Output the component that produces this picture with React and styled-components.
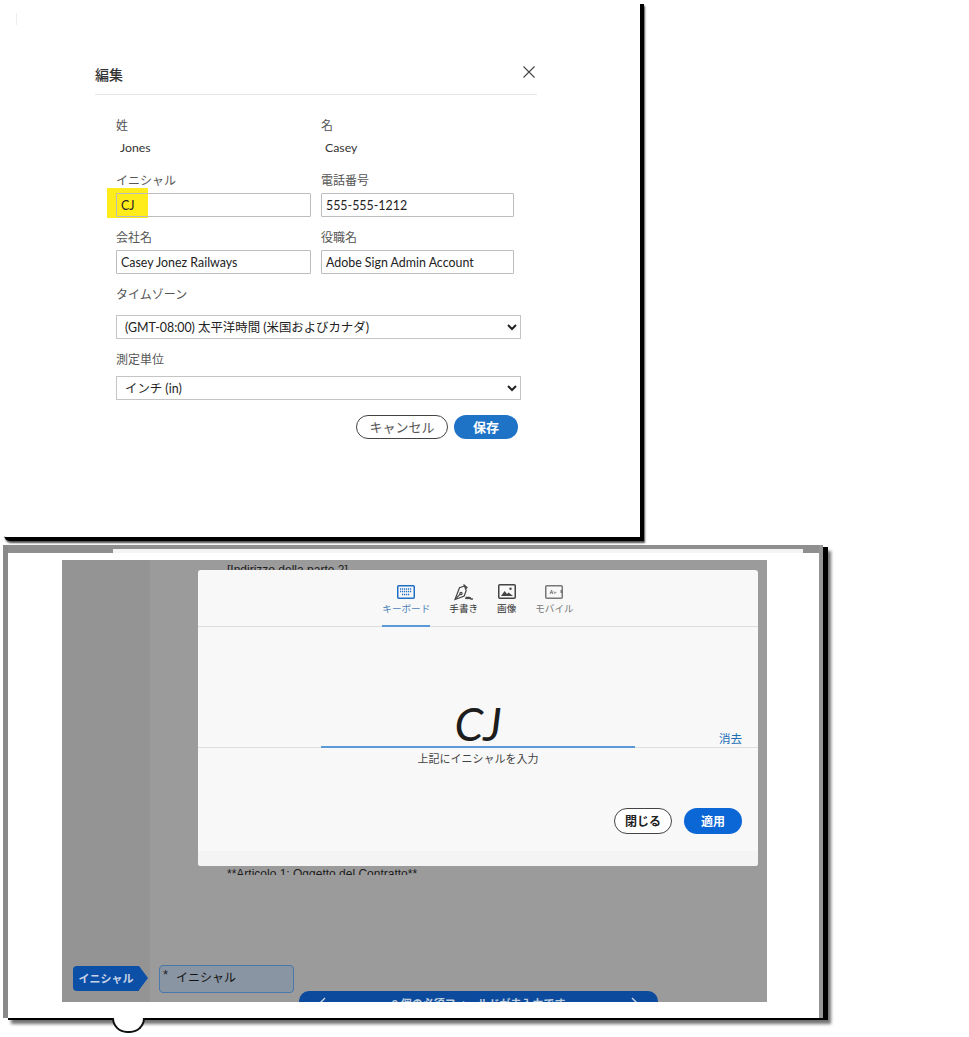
import React from "react";
import styled, { createGlobalStyle } from "styled-components";

const sans = `"Lato", "Noto Sans CJK JP", sans-serif`;

const Global = createGlobalStyle`
  html, body { margin: 0; padding: 0; background: #fff; }
  body { font-family: ${sans}; color: #222; }
  * { box-sizing: border-box; }
`;

const Page = styled.div`
  width: 969px;
  height: 1037px;
  overflow: hidden;
  background: #fff;
`;

/* ---------- top window ---------- */
const EditWindow = styled.section`
  width: 640px;
  height: 537px;
  background: #fff;
  box-shadow: 4px 4px 0 #000, 5px 6px 2px rgba(0, 0, 0, 0.7);
  border-bottom-left-radius: 6px;
  padding-top: 13px;
`;
const Mark = styled.div`
  width: 1px;
  height: 12px;
  margin-left: 16px;
  background: #eee;
`;
const Dialog = styled.div`
  width: 442px;
  margin: 37px 0 0 95px;
`;
const DialogHeader = styled.header`
  height: 33px;
  display: flex;
  align-items: flex-start;
  justify-content: space-between;
  border-bottom: 1px solid #e6e6e6;
  padding-right: 2px;
`;
const DialogTitle = styled.h2`
  margin: 0;
  font-size: 14px;
  line-height: 26px;
  font-weight: 500;
  color: #333;
`;
const CloseIcon = styled.svg`
  width: 12px;
  height: 12px;
  margin-top: 4px;
  stroke: #444;
  stroke-width: 1.1;
  fill: none;
`;
const Form = styled.form`
  margin: 23px 0 0 21px;
  width: 405px;
`;
const NameGrid = styled.div`
  display: grid;
  grid-template-columns: 195px 193px;
  column-gap: 10px;
  row-gap: 13px;
  margin-bottom: ${(p) => p.$after}px;
`;
const Field = styled.div`
  display: flex;
  flex-direction: column;
  gap: ${(p) => p.$gap || 4}px;
`;
const Label = styled.label`
  font-size: 12px;
  line-height: 16px;
  color: #555;
`;
const Value = styled.div`
  font-size: 12.3px;
  line-height: 16px;
  padding-left: 4px;
  color: #333;
`;
const InputWrap = styled.div`
  position: relative;
  background: #fff;
`;
const Highlight = styled.span`
  position: absolute;
  left: -9px;
  top: -5px;
  width: 41px;
  height: 30px;
  background: #ffec1a;
`;
const TextInput = styled.input`
  position: relative;
  display: block;
  width: 100%;
  height: 24px;
  padding: 0 4px;
  border: 1px solid #bdbdbd;
  border-radius: 1px;
  background: transparent;
  font: 12.4px ${sans};
  color: #222;
  outline: none;
`;
const SelectBox = styled.select`
  display: block;
  width: 405px;
  height: 24px;
  padding: 0 4px;
  border: 1px solid #c4c4c4;
  border-radius: 0;
  background: #fff;
  font: 12.4px ${sans};
  color: #222;
  outline: none;
`;
const WideField = styled(Field)`
  margin-bottom: ${(p) => p.$after}px;
`;
const Actions = styled.div`
  display: flex;
  justify-content: flex-end;
  margin-top: ${(p) => p.$top || 0}px;
  gap: ${(p) => p.$gap || 6}px;
  padding-right: ${(p) => p.$right || 3}px;
`;
const Pill = styled.button`
  height: ${(p) => p.$h || 24}px;
  width: ${(p) => p.$w}px;
  padding: 0 0 2px;
  border-radius: 13px;
  font: ${(p) => (p.$primary || p.$bold ? 700 : 400)} ${(p) => p.$fs || 12}px ${sans};
  color: ${(p) => (p.$primary ? "#fff" : p.$ink || "#555")};
  background: ${(p) => (p.$primary ? p.$fill : "#fff")};
  border: ${(p) => (p.$primary ? "none" : "1px solid #444")};
`;

/* ---------- bottom window ---------- */
const SignWindow = styled.section`
  position: relative;
  width: 820px;
  height: 473px;
  margin: 8px 0 0 3px;
  background: #fff;
  border-left: 5px solid #8a8a8a;
  border-right: 4px solid #969696;
  box-shadow: 5px 2px 0 #000, 8px 6px 3px rgba(0, 0, 0, 0.55);
`;
const TopStrip = styled.div`
  height: 8px;
  background: #8f8f8f;
  padding: 4px 16px 0 105px;
`;
const TopBump = styled.div`
  height: 4px;
  background: #f4f4f4;
`;
const Sheet = styled.div`
  position: relative;
  display: grid;
  grid-template-columns: 88px 1fr;
  width: 705px;
  height: 442px;
  margin: 7px 0 0 54px;
  overflow: hidden;
  background: #9b9b9b;
`;
const SideRail = styled.div`
  background: #949494;
  display: flex;
  align-items: flex-end;
  padding: 0 0 11px 11px;
`;
const Tag = styled.div`
  position: relative;
  width: 66px;
  height: 25px;
  border-radius: 4px 0 0 4px;
  background: #0b4fa6;
  color: #c8d4e6;
  font-size: 11px;
  font-weight: 700;
  line-height: 25px;
  text-align: center;
  &::after {
    content: "";
    position: absolute;
    left: 100%;
    top: 0;
    border-left: 9px solid #0b4fa6;
    border-top: 12.5px solid transparent;
    border-bottom: 12.5px solid transparent;
  }
`;
const Doc = styled.div`
  display: flex;
  flex-direction: column;
`;
const DocLine = styled.p`
  margin: ${(p) => p.$top}px 0 0 77px;
  height: ${(p) => p.$clip || 14}px;
  overflow: hidden;
  font: 12px/14px "Liberation Sans", sans-serif;
  color: #1c1c1c;
  white-space: nowrap;
`;
const BottomRow = styled.div`
  display: flex;
  align-items: flex-start;
  margin: auto 0 0 9px;
  height: 37px;
`;
const RequiredField = styled.div`
  display: flex;
  width: 135px;
  height: 28px;
  border: 1px solid #4a78aa;
  border-radius: 4px;
  background: #8995a2;
  color: #111;
  font-size: 12px;
  line-height: 24px;
  padding-left: 3px;
  gap: 8px;
`;
const Star = styled.span`
  font: 13px/18px "Liberation Sans", sans-serif;
  color: #222;
`;
const RequiredBar = styled.div`
  display: flex;
  justify-content: space-between;
  align-items: flex-start;
  width: 359px;
  height: 24px;
  margin: 26px 0 0 5px;
  padding: 6px 20px 0;
  border-radius: 10px 10px 0 0;
  background: #0b4a9c;
  color: #bcd;
  font-size: 11px;
  line-height: 14px;
  font-weight: 700;
`;

/* ---------- modal ---------- */
const Modal = styled.div`
  position: absolute;
  left: 136px;
  top: 10px;
  width: 560px;
  height: 296px;
  display: flex;
  flex-direction: column;
  background: #f8f8f8;
  border-radius: 3px;
  overflow: hidden;
`;
const Tabs = styled.div`
  height: 57px;
  flex: none;
  display: flex;
  justify-content: center;
  gap: 19px;
  border-bottom: 1px solid #dcdcdc;
`;
const TabItem = styled.div`
  height: 57px;
  padding-top: 14px;
  display: flex;
  flex-direction: column;
  align-items: center;
  gap: 3px;
  font-size: 9.6px;
  line-height: 14px;
  white-space: nowrap;
  color: ${(p) => p.$color};
  border-bottom: ${(p) => (p.$active ? "2px solid #5b9ad6" : "0")};
`;
const IconSlot = styled.span`
  height: 15px;
  display: flex;
  align-items: center;
  justify-content: center;
  svg { display: block; flex: none; }
`;
const SignGrid = styled.div`
  display: grid;
  grid-template-columns: 123px 314px 1fr;
  height: 121px;
  flex: none;
  border-bottom: 1px solid #dedede;
`;
const SignArea = styled.div`
  grid-column: 2;
  height: 121px;
  border-bottom: 2px solid #5b9ad6;
  margin-bottom: -1px;
  display: flex;
  align-items: flex-end;
  justify-content: center;
`;
const SignText = styled.span`
  font: italic 400 46px/44px "Lato", sans-serif;
  color: #1d1d1d;
`;
const ClearLink = styled.a`
  justify-self: end;
  align-self: end;
  margin: 0 16px 0 0;
  font-size: 11.5px;
  line-height: 16px;
  color: #1a6fb5;
`;
const Hint = styled.p`
  margin: 3px 0 0;
  text-align: center;
  font-size: 11px;
  line-height: 16px;
  color: #444;
`;
const ModalFooter = styled.div`
  margin-top: 41px;
`;
const ModalBand = styled.div`
  margin-top: auto;
  height: 15px;
  background: #f4f4f4;
`;
const Tail = styled.div`
  position: absolute;
  left: 104px;
  top: 100%;
  width: 33px;
  height: 15px;
  background: #fff;
  border: 2px solid #111;
  border-top: 0;
  border-radius: 0 0 17px 17px;
`;

const KeyboardIcon = () => (
  <svg width="18" height="14" viewBox="0 0 18 14" fill="none" stroke="#1f6fc4">
    <rect x="0.75" y="0.75" width="16.5" height="12.5" rx="1" strokeWidth="1.5" />
    <path d="M3 4h12M3 6.5h12M5 9.5h8" strokeWidth="1.4" strokeDasharray="1.2 .8" />
  </svg>
);
const PenIcon = () => (
  <svg width="21" height="18" viewBox="0 0 21 18" fill="none" stroke="#444" strokeWidth="1.2">
    <path d="M10.5 1.5l3.5 3-1.4 1.2M11.5 3l-5 1.8L2 16.5l9.2-3.5L13.2 7.5z" />
    <path d="M2.2 16.2l5-5" />
    <circle cx="8" cy="10.5" r="1.1" />
    <path d="M12.5 16c1-2.5 1.6-2.5 1.8 0 .5-2.5 1.2-2.5 1.6 0 .5-2 1.2-2 2 0h2" strokeWidth="1.4" />
  </svg>
);
const ImageIcon = () => (
  <svg width="18" height="15" viewBox="0 0 18 15">
    <rect x="0.75" y="0.75" width="16.5" height="13.5" rx="1" fill="none" stroke="#444" strokeWidth="1.5" />
    <path d="M3 12l3.6-5 2.4 3 1.6-1.6L15 12z" fill="#444" />
    <circle cx="12.5" cy="4.8" r="1.2" fill="#444" />
  </svg>
);
const MobileIcon = () => (
  <svg width="18" height="14" viewBox="0 0 18 14" fill="none">
    <rect x="0.75" y="0.75" width="16.5" height="12.5" rx="1" stroke="#777" strokeWidth="1.5" />
    <rect x="15.5" y="5" width="2" height="3" fill="#777" />
    <path d="M5 9l1.6-4 1 4M5.6 7.6h1.8M9 6.5c.5 2 .8 2.5 1.2 1.5.3-1 .8-1 1 0" stroke="#777" strokeWidth=".9" />
  </svg>
);
const Chevron = ({ flip }) => (
  <svg width="7" height="12" viewBox="0 0 7 12" fill="none" stroke="#cfd9e8" strokeWidth="1.4">
    <path d={flip ? "M1 1l5 5-5 5" : "M6 1L1 6l5 5"} />
  </svg>
);

export default function App() {
  return (
    <Page>
      <Global />
      <EditWindow>
        <Mark />
        <Dialog>
          <DialogHeader>
            <DialogTitle>編集</DialogTitle>
            <CloseIcon viewBox="0 0 12 12"><path d="M.5.5l11 11M11.5.5l-11 11" /></CloseIcon>
          </DialogHeader>
          <Form>
            <NameGrid $after={17}>
              <Field $gap={6}><Label>姓</Label><Value>Jones</Value></Field>
              <Field $gap={6}><Label>名</Label><Value>Casey</Value></Field>
            </NameGrid>
            <NameGrid $after={13}>
              <Field>
                <Label>イニシャル</Label>
                <InputWrap><Highlight /><TextInput readOnly value="CJ" /></InputWrap>
              </Field>
              <Field>
                <Label>電話番号</Label>
                <InputWrap><TextInput readOnly value="555-555-1212" /></InputWrap>
              </Field>
              <Field>
                <Label>会社名</Label>
                <InputWrap><TextInput readOnly value="Casey Jonez Railways" /></InputWrap>
              </Field>
              <Field>
                <Label>役職名</Label>
                <InputWrap><TextInput readOnly value="Adobe Sign Admin Account" /></InputWrap>
              </Field>
            </NameGrid>
            <WideField $gap={12} $after={13}>
              <Label>タイムゾーン</Label>
              <SelectBox defaultValue="pst"><option value="pst">(GMT-08:00) 太平洋時間 (米国およびカナダ)</option></SelectBox>
            </WideField>
            <WideField $gap={8} $after={15}>
              <Label>測定単位</Label>
              <SelectBox defaultValue="in"><option value="in">インチ (in)</option></SelectBox>
            </WideField>
            <Actions>
              <Pill type="button" $w={92} $fs={13}>キャンセル</Pill>
              <Pill type="button" $w={64} $fs={13} $primary $fill="#1f73c7">保存</Pill>
            </Actions>
          </Form>
        </Dialog>
      </EditWindow>

      <SignWindow>
        <TopStrip><TopBump /></TopStrip>
        <Sheet>
          <SideRail><Tag>イニシャル</Tag></SideRail>
          <Doc>
            <DocLine $top={3}>[Indirizzo della parte 2]</DocLine>
            <DocLine $top={290} $clip={8}>**Articolo 1: Oggetto del Contratto**</DocLine>
            <BottomRow>
              <RequiredField><Star>*</Star>イニシャル</RequiredField>
              <RequiredBar>
                <Chevron />
                <span>3 個の必須フィールドが未入力です</span>
                <Chevron flip />
              </RequiredBar>
            </BottomRow>
          </Doc>
          <Modal>
            <Tabs>
              <TabItem $active $color="#4a7fb8"><IconSlot><KeyboardIcon /></IconSlot>キーボード</TabItem>
              <TabItem $color="#333"><IconSlot><PenIcon /></IconSlot>手書き</TabItem>
              <TabItem $color="#333"><IconSlot><ImageIcon /></IconSlot>画像</TabItem>
              <TabItem $color="#777"><IconSlot><MobileIcon /></IconSlot>モバイル</TabItem>
            </Tabs>
            <SignGrid>
              <SignArea><SignText>CJ</SignText></SignArea>
              <ClearLink>消去</ClearLink>
            </SignGrid>
            <Hint>上記にイニシャルを入力</Hint>
            <ModalFooter>
              <Actions $gap={12} $right={16}>
                <Pill type="button" $w={58} $h={26} $ink="#222" $bold>閉じる</Pill>
                <Pill type="button" $w={58} $h={26} $primary $fill="#0b66d6">適用</Pill>
              </Actions>
            </ModalFooter>
            <ModalBand />
          </Modal>
        </Sheet>
        <Tail />
      </SignWindow>
    </Page>
  );
}
